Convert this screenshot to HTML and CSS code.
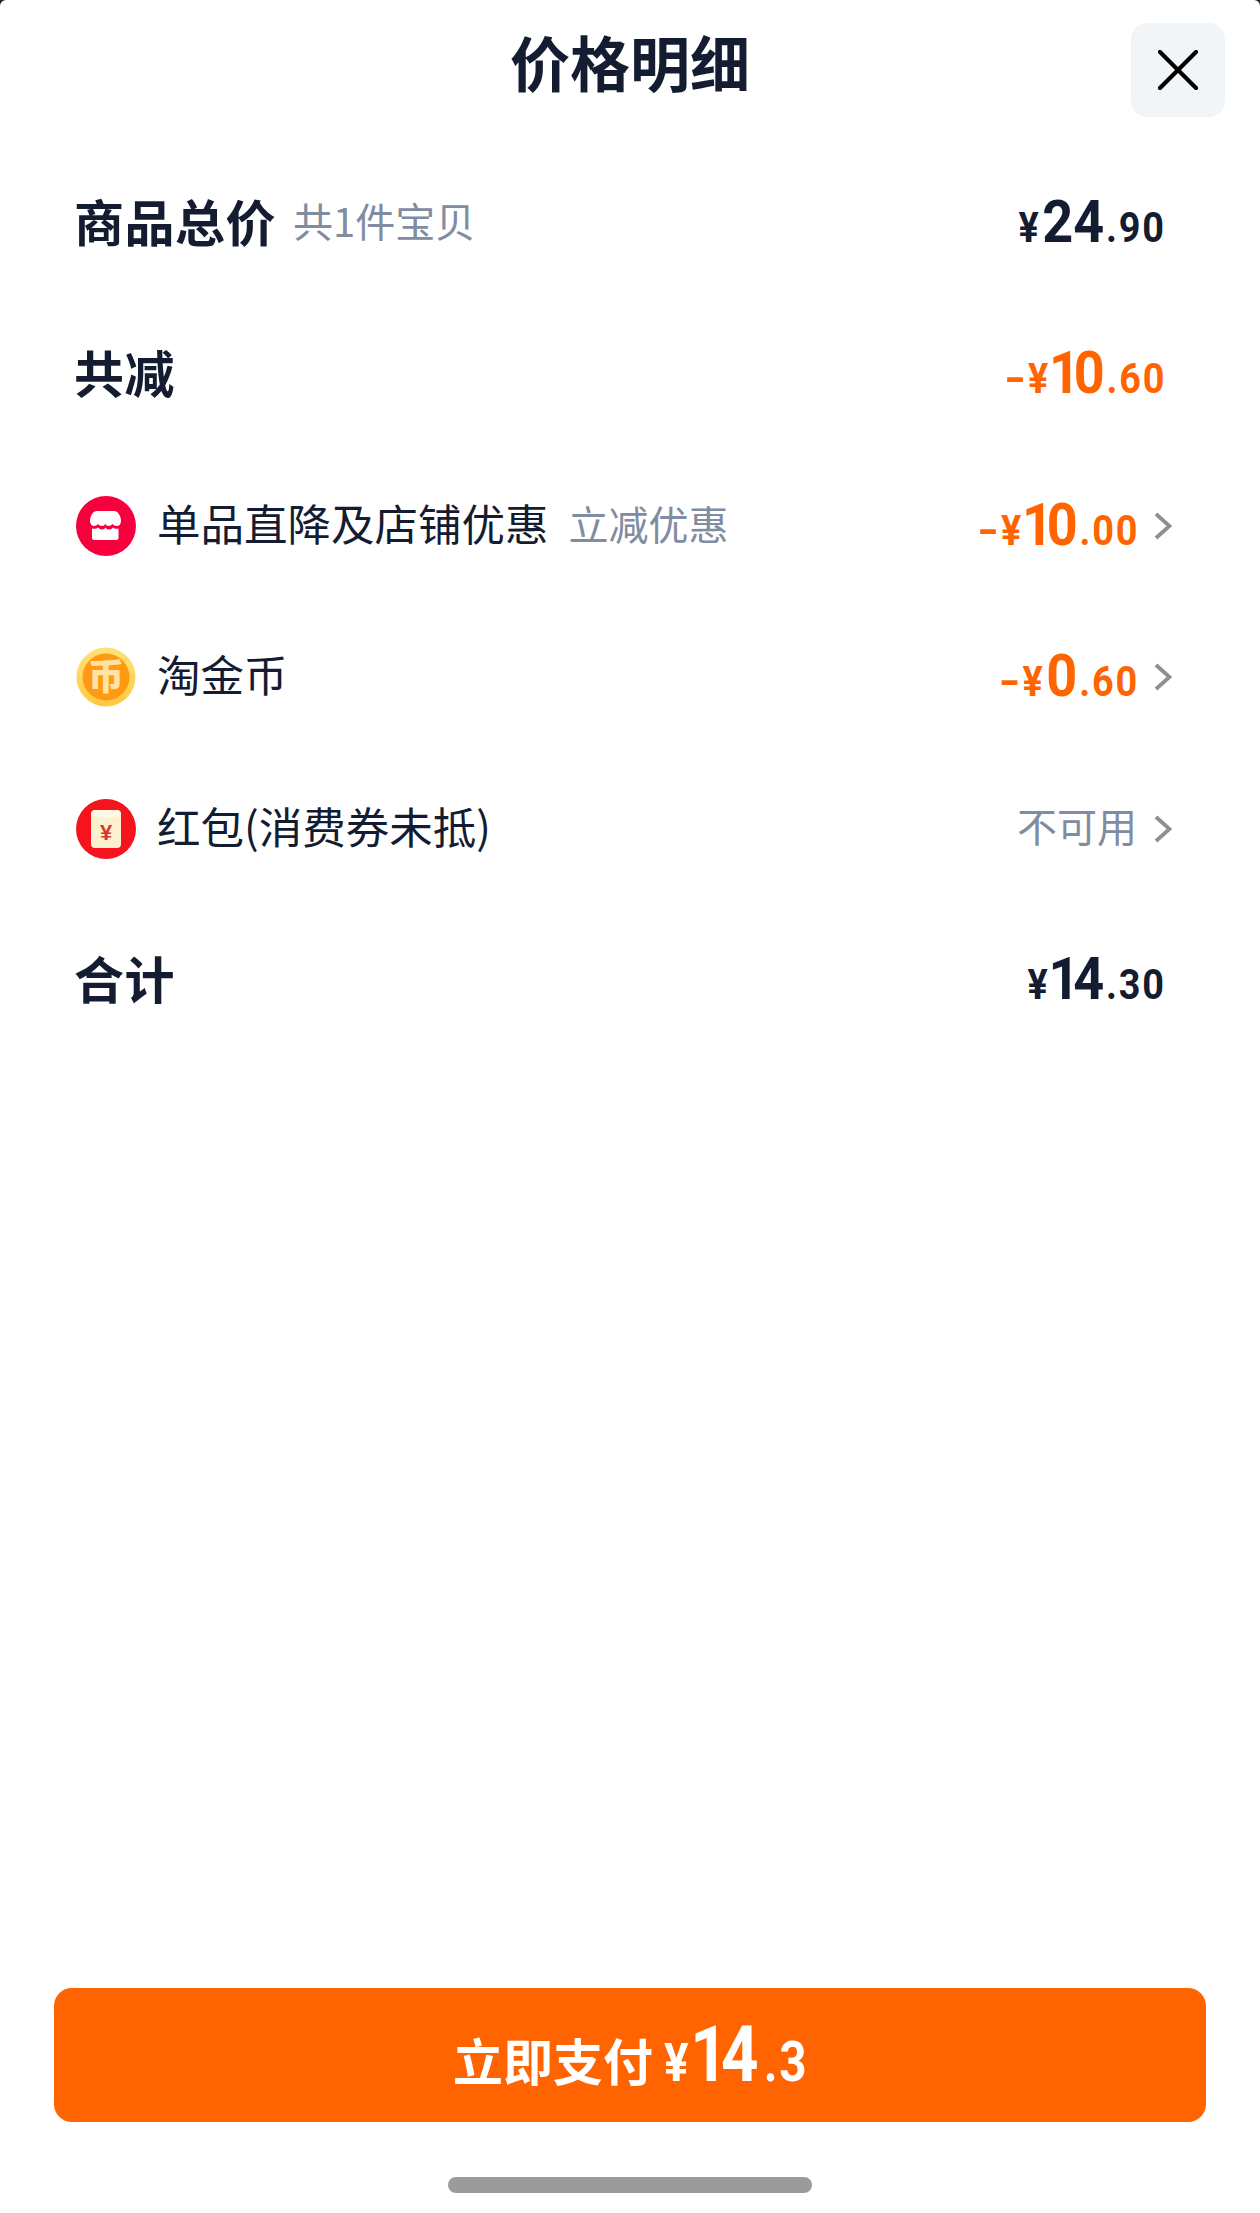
FILE: index.html
```html
<html lang="zh">

<head>
    <meta charset="UTF-8">
    <meta name="viewport" content="width=device-width, initial-scale=1.0">
    <title>价格明细</title>
    <link rel="stylesheet" href="styles.css">
</head>

<body>
    <div class="sheet">
        <div class="header">
            <h1>价格明细</h1>
            <div class="close">
                <svg width="40" height="40" viewBox="0 0 40 40">
                    <path d="M2 2L38 38M38 2L2 38" stroke="#000" stroke-width="4.200" stroke-linecap="round" fill="none" />
                </svg>
            </div>
        </div>

        <div class="list">
            <div class="row">
                <div class="label strong">商品总价</div>
                <div class="sub near">共1件宝贝</div>
                <div class="price"><span class="yen">¥</span><span class="int">24</span><span class="dec">.90</span></div>
            </div>
            <div class="row">
                <div class="label strong">共减</div>
                <div class="price orange"><span class="minus">-</span><span class="yen">¥</span><span class="int one">10</span><span class="dec">.60</span></div>
            </div>
            <div class="row">
                <svg class="icon" viewBox="0 0 60 60">
                    <circle cx="30" cy="30" r="30" fill="#f7003e" />
                    <path d="M21 15H38C42 15 45 20 45 25C45 28 43 30 41 30C39 30 37.500 29 36.500 28C35.500 29 34 30 32.500 30C31 30 30 29 29.500 28C28.500 29 27.500 30 26 30C24.500 30 23 29 22 28C21 29 19.500 30 18 30C16 30 14 28 14 25C14 20 17 15 21 15Z" fill="#fff" />
                    <path d="M16 32.500C18 33 20.500 33 22 31.500C23.500 33 25 33.500 26 33.500C27.500 33.500 28.500 33 29.500 31.500C30.500 33 32 33.500 33 33.500C34.500 33.500 36 33 37 31.500C38.500 33 40.500 33 42.500 32.500V42C42.500 43 41.500 44 40.500 44H18C17 44 16 43 16 42Z" fill="#fff" />
                </svg>
                <div class="label">单品直降及店铺优惠</div>
                <div class="sub">立减优惠</div>
                <div class="price orange"><span class="minus">-</span><span class="yen">¥</span><span class="int one">10</span><span class="dec">.00</span></div>
                <svg class="arrow" width="18" height="28" viewBox="0 0 18 28">
                    <path d="M2 2L15.500 14L2 26" stroke="#8f8f8f" stroke-width="3.800" fill="none" />
                </svg>
            </div>
            <div class="row">
                <svg class="icon" viewBox="0 0 60 60">
                    <defs>
                        <linearGradient id="coin" x1="0" y1="0" x2="0" y2="1">
                            <stop offset="0" stop-color="#ffe27a" />
                            <stop offset="1" stop-color="#ffc93f" />
                        </linearGradient>
                    </defs>
                    <circle cx="30" cy="30" r="29.500" fill="url(#coin)" />
                    <circle cx="30" cy="30" r="23.500" fill="#ff9a12" />
                    <text class="coin-text" x="30" y="43" text-anchor="middle">币</text>
                </svg>
                <div class="label">淘金币</div>
                <div class="price orange"><span class="minus">-</span><span class="yen">¥</span><span class="int">0</span><span class="dec">.60</span></div>
                <svg class="arrow" width="18" height="28" viewBox="0 0 18 28">
                    <path d="M2 2L15.500 14L2 26" stroke="#8f8f8f" stroke-width="3.800" fill="none" />
                </svg>
            </div>
            <div class="row">
                <svg class="icon" viewBox="0 0 60 60">
                    <circle cx="30" cy="30" r="30" fill="#f5141e" />
                    <rect x="15" y="11" width="30" height="38" rx="4" fill="#fdf0cf" />
                    <path d="M15 16C20 20 40 20 45 16V15C45 13 43 11 41 11H19C17 11 15 13 15 15Z" fill="#fff8e6" />
                    <text class="packet-text" x="30" y="41" text-anchor="middle">¥</text>
                </svg>
                <div class="label">红包(消费券未抵)</div>
                <div class="na">不可用</div>
                <svg class="arrow arrow-na" width="18" height="28" viewBox="0 0 18 28">
                    <path d="M2 2L15.500 14L2 26" stroke="#8f8f8f" stroke-width="3.800" fill="none" />
                </svg>
            </div>
            <div class="row">
                <div class="label strong">合计</div>
                <div class="price"><span class="yen">¥</span><span class="int one">14</span><span class="dec">.30</span></div>
            </div>
        </div>

        <div class="footer">
            <div class="pay">
                <span class="pay-text">立即支付</span>
                <div class="pay-num"><span class="pay-yen">¥</span><span class="pay-int">14</span><span class="pay-dec">.3</span></div>
            </div>
            <div class="home-bar"></div>
        </div>
    </div>
</body>

</html>
```

FILE: styles.css
```css
* {
    box-sizing: border-box;
}

body {
    margin: 0;
    background-color: #222;
    font-family: "Noto Sans CJK SC", "Noto Sans", sans-serif;
    color: #131c30;
}

.sheet {
    display: flex;
    flex-direction: column;
    position: relative;
    height: 2213px;
    background-color: #fff;
    border-radius: 6px 6px 0 0;
}

.header {
    height: 147px;
    padding-top: 16px;
    text-align: center;
}

h1 {
    margin: 0;
    font-size: 60px;
    line-height: 90px;
    font-weight: 700;
}

.close {
    position: absolute;
    top: 23px;
    right: 35px;
    display: flex;
    align-items: center;
    justify-content: center;
    width: 94px;
    height: 94px;
    background-color: #f2f5f8;
    border-radius: 16px;
}

.row {
    display: flex;
    align-items: center;
    height: 151.500px;
    padding: 0 94px 0 76px;
}

.label {
    padding-bottom: 6px;
    font-size: 43.500px;
    line-height: 60px;
}

.strong {
    margin-left: -2px;
    font-size: 50px;
    font-weight: 700;
    letter-spacing: 0.500px;
}

.sub {
    margin-left: 20px;
    padding-bottom: 6px;
    font-size: 40px;
    line-height: 60px;
    color: #7f8ca1;
}

.near {
    margin-left: 17px;
}

.icon {
    width: 60px;
    height: 60px;
    margin-right: 21px;
    flex-shrink: 0;
}

.coin-text {
    font-family: "Noto Sans CJK SC", sans-serif;
    font-size: 36px;
    font-weight: 900;
    fill: #ffe3a6;
}

.packet-text {
    font-family: "Liberation Sans", sans-serif;
    font-size: 22px;
    font-weight: 700;
    fill: #d8352a;
}

/* no din-like font here, so roboto digits are squeezed */
.price {
    display: flex;
    align-items: baseline;
    margin-left: auto;
    padding-top: 4px;
    font-family: Roboto, sans-serif;
    font-weight: 700;
    line-height: 60px;
    transform: scaleX(0.9);
    transform-origin: right center;
}

.orange {
    color: #ff6400;
}

.yen {
    font-size: 42px;
    margin-right: 4px;
}

.minus {
    display: inline-block;
    margin-right: 6px;
    font-size: 42px;
    transform: scaleX(1.5);
}

.int {
    font-size: 60px;
}

/* roboto's 1 is much wider than the one in the shot */
.one {
    margin: 0 7px 0 -3px;
    letter-spacing: -7px;
}

.dec {
    font-size: 42px;
    letter-spacing: 2px;
    margin-left: 2px;
}

.na {
    margin-left: auto;
    padding-bottom: 8px;
    font-size: 40px;
    line-height: 60px;
    color: #7f8ca1;
}

.arrow {
    margin-left: 15px;
    margin-right: -6px;
    flex-shrink: 0;
}

.arrow-na {
    margin-left: 17px;
}

.footer {
    display: flex;
    flex-direction: column;
    align-items: center;
    margin-top: auto;
    padding: 0 54px 20px;
}

.pay {
    display: flex;
    align-items: baseline;
    width: 100%;
    height: 134px;
    padding: 22px 0 0 399px;
    background-color: #ff6400;
    border-radius: 18px;
    color: #fff;
    font-weight: 700;
}

.pay-text {
    font-size: 50px;
    margin-right: 11px;
}

.pay-num {
    display: flex;
    align-items: baseline;
    font-family: Roboto, sans-serif;
    transform: scaleX(0.85);
    transform-origin: left center;
}

.pay-yen {
    font-size: 54px;
    margin-right: 2px;
}

.pay-int {
    font-size: 77px;
    margin-right: 8px;
    letter-spacing: -8px;
}

.pay-dec {
    font-size: 56px;
    margin-left: 6px;
    letter-spacing: 2px;
}

.home-bar {
    width: 364px;
    height: 16px;
    margin-top: 55px;
    background-color: #9b9b9b;
    border-radius: 8px;
}
```
